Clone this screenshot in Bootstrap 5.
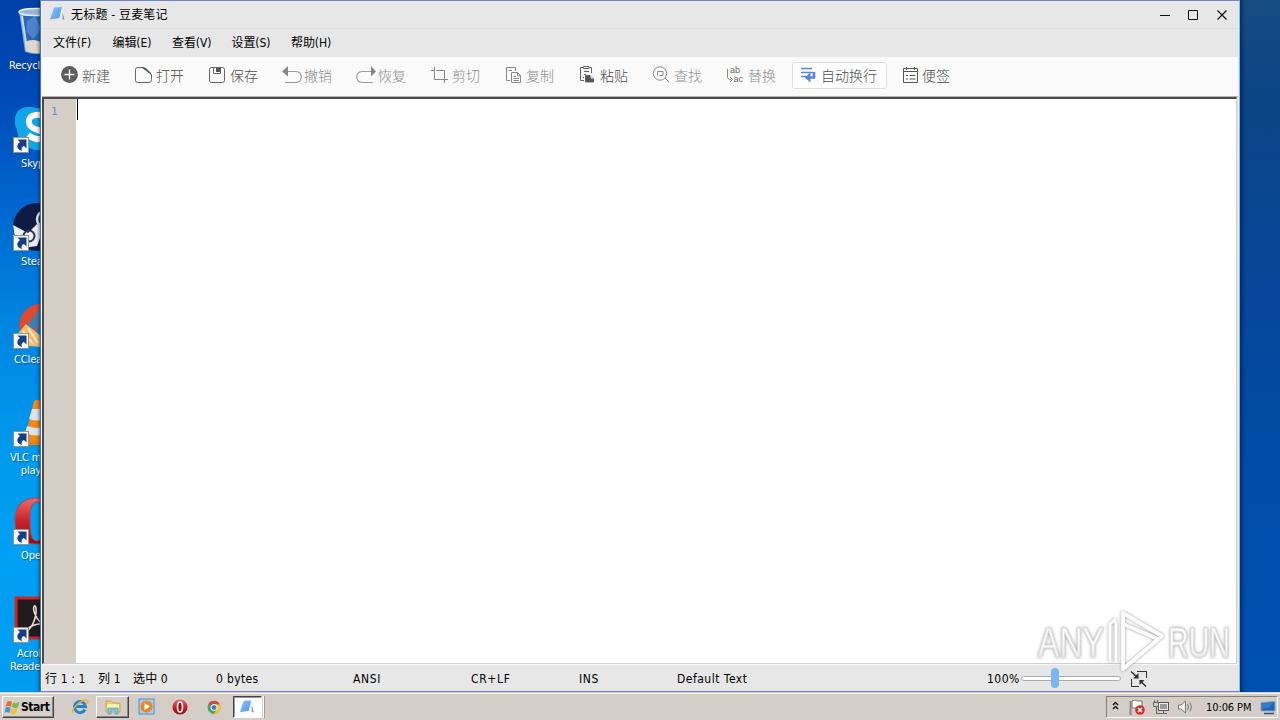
<!DOCTYPE html>
<html lang="zh-CN">
<head>
<meta charset="utf-8">
<meta name="viewport" content="width=device-width, initial-scale=1">
<title>无标题 - 豆麦笔记</title>
<link href="https://cdn.jsdelivr.net/npm/bootstrap@5.3.0/dist/css/bootstrap.min.css" rel="stylesheet">
<style>
html,body{height:100%}
body{font-family:"DejaVu Sans Condensed","Noto Sans CJK SC",sans-serif;font-stretch:condensed;font-size:12px;line-height:1;color:#000;overflow:hidden}
svg{display:block;flex:none}
.desk{width:1280px;height:720px;background:linear-gradient(180deg,#0040a8 0,#0049b6 90px,#0065ce 200px,#0086e3 330px,#0099ee 450px,#00a0f4 560px,#009cf2 690px)}
.desk-right{left:1239px;top:0;width:41px;height:692px;background:linear-gradient(90deg,rgba(0,20,70,.55),transparent 7px),linear-gradient(180deg,#174c82 0,#0c4585 90px,#06469a 300px,#004da8 460px,#0050b0 692px)}
/* desktop shortcuts */
.shortcut{left:0;width:64px;color:#fff;font-size:11px;line-height:13px;text-align:center;text-shadow:1px 1px 1px rgba(0,32,80,.5)}
.shortcut svg{position:absolute;left:13px;top:0}
.shortcut span{position:absolute;top:53px;white-space:nowrap;font-family:"DejaVu Sans Condensed";letter-spacing:-.15px}
/* application window */
.app{left:40px;top:0;width:1200px;height:692px;background:#e7e7e7;border:1px solid #6f86c8;border-color:#6f86c8 #8eb9ee #6f7fe0 #5474a4;box-shadow:inset 1px 0 #f0f4fb,inset -1px 0 #d9ebfb,-1px 0 3px rgba(0,20,70,.55);z-index:2}
.caption{height:28px;padding:1px 0 0 8px;border-bottom:1px solid #dedede}
.caption .t{width:98px;margin-left:4px;white-space:nowrap;letter-spacing:.2px}
.caption .btns{padding-right:10px}
.menus{height:28px;padding-left:12px}
.menus span{width:59.5px;font-size:12px;white-space:nowrap;letter-spacing:-.1px}
.tools{height:40px;margin:0 1px;padding:0 0 3px 18px;background:#fafafa;border-bottom:1px solid #b5b5b5;font-family:"Noto Sans CJK SC",sans-serif;font-weight:300;font-size:14px;color:#4c4c4c}
.tool{width:74px;gap:4px;white-space:nowrap}
.tool.off{color:#8c8c8c}
.tool.wrap-on{width:95px;height:27px;border:1px solid #dedede;border-radius:3px;background:#fff;margin-left:-8px;padding-left:7px;gap:3px}
.tool.note{margin-left:15px;gap:2px}
.editor{height:567px;margin:0 2px 0 1px;background:#fff;border-top:2px solid #4a4a4a;border-left:2px solid #4c4c4c;border-right:1px solid #d4d0c0;border-bottom:1px solid #cfcfcf}
.gutter{width:32px;background:#d6cfc8;color:#6a90d6;padding:7px 0 0 7px;font-family:"DejaVu Sans Mono",monospace;font-size:11px}
.caret{width:1px;height:21px;margin-left:1px;background:#000}
.status{height:27px;padding:2px 0 0 4px;border-top:1px solid #f8f8f8;white-space:nowrap}
.status>span,.status>div{flex:none}
.status>span{letter-spacing:.13px}
.s1{width:53px}.s2{width:35px}.s3{width:83px}.status>.s4{width:137px;letter-spacing:.35px}.s5{width:118px}.s6{width:108px}.s7{width:98px}.status>.s8{width:310px;letter-spacing:.5px}.status>.s9{width:34px;letter-spacing:.5px}
.s5,.s6,.s7{text-indent:0}
.status>.s5,.status>.s6,.status>.s7{letter-spacing:.65px}
.slider{width:100px;height:20px;position:relative;top:-1px}
.slider .rail{height:5px;margin-top:8px;border:1px solid #ababab;border-radius:3px;background:#fff}
.slider .knob{position:absolute;left:30px;top:0;width:8px;height:20px;border-radius:4px;background:#78b8f2}
/* watermark */
.wm{left:1030px;top:602px;z-index:3}
/* taskbar */
.bar{left:0;top:692px;width:1280px;height:28px;background:#d5cec8;border-top:1px solid #d6d2bf;box-shadow:inset 0 1px #f5f3ee;z-index:4}
.start{width:52px;height:22px;margin:3px 0 0 2px;padding-left:1px;background:#d6d0ca;border:1px solid;border-color:#fff #444 #444 #fff;box-shadow:inset -1px -1px #8b8680;font:bold 12px "DejaVu Sans Condensed",sans-serif;letter-spacing:-.45px}
.task{width:33px;height:22px;margin-top:3px}
.task.up{border:1px solid;border-color:#fff #444 #444 #fff;box-shadow:inset -1px -1px #8b8680}
.task.down{width:29px;background:#fff;border:1px solid;border-color:#444 #fff #fff #444;box-shadow:inset 1px 1px #999}
.grip{width:2px;height:22px;margin:3px 0 0 1px;border-left:1px solid #fff;border-right:1px solid #a49d97}
.tray{width:172px;height:22px;margin:3px 2px 0 auto;border:1px solid;border-color:#858079 #fff #fff #858079;padding-left:5px}
.clock{width:46px;font-size:11px;letter-spacing:-.1px;white-space:nowrap}
</style>
</head>
<body>
<svg width="0" height="0" class="position-absolute">
  <defs>
    <linearGradient id="gRed" x1="0" y1="0" x2="0" y2="1"><stop offset="0" stop-color="#e86a6a"/><stop offset=".5" stop-color="#c9232a"/><stop offset="1" stop-color="#8f0d12"/></linearGradient>
    <linearGradient id="gPage" x1="0" y1="0" x2="1" y2="1"><stop offset="0" stop-color="#8cc4fb"/><stop offset="1" stop-color="#4d95ef"/></linearGradient>
    <linearGradient id="gMark" x1="0" y1="0" x2="0" y2="1"><stop offset="0" stop-color="#fff"/><stop offset=".55" stop-color="#fafafa"/><stop offset="1" stop-color="#e2e2e2"/></linearGradient>
    <symbol id="arrow" viewBox="0 0 16 16"><rect x=".5" y=".5" width="15" height="15" fill="#f4f7fa" stroke="#9a8f84"/><path d="M4.500 2.500H13.500V11.500L11 9C8.500 10 8 11.500 9 14C4 12.500 2.500 8.500 7 5Z" fill="#143f86"/></symbol>
    <symbol id="pad" viewBox="0 0 18 16"><path d="M5 1.500L13 1L10.500 12L1 13.500Z" fill="url(#gPage)"/><path d="M13 1L16 13L10.500 12Z" fill="#e6f1fc"/><path d="M13.500 6L15.500 13.500H13.500Z" fill="#7f95aa"/></symbol>
  </defs>
</svg>
<main class="desk position-relative overflow-hidden">
  <div class="desk-right position-absolute"></div>

  <div class="shortcut position-absolute" style="top:6px">
    <svg width="48" height="50" viewBox="0 0 48 50"><path d="M6 5L12 46Q24 50 36 46L42 5Z" fill="#7ea7da"/><path d="M9 10L13 40L36 42L38 8Z" fill="#2f64b2"/><path d="M14 15L22 10L28 23L20 33L13 25Z" fill="#4b83cc"/><path d="M12 36Q20 31 32 38L33 46Q22 49 13 45Z" fill="#ded8c8"/><path d="M9 10L14 44" stroke="#c6dbef" stroke-width="2"/><ellipse cx="24" cy="6" rx="18" ry="3.500" fill="#97b4d6" stroke="#e2edf7" stroke-width="1.500"/></svg>
    <span style="left:9px">Recycle Bin</span>
  </div>
  <div class="shortcut position-absolute" style="top:104px">
    <svg width="48" height="50" viewBox="0 0 48 50"><rect x="2" y="3" width="28" height="28" rx="12" fill="#10a6e8"/><circle cx="25" cy="25" r="21" fill="#10a6e8"/><path d="M33 16Q31 10 23 11Q15 12 16 19Q17 24 25 26Q32 28 30 33Q25 38 15 31" fill="none" stroke="#fff" stroke-width="6"/><use href="#arrow" y="33" width="16" height="16"/></svg>
    <span style="left:21px">Skype</span>
  </div>
  <div class="shortcut position-absolute" style="top:202px">
    <svg width="48" height="50" viewBox="0 0 48 50"><circle cx="24" cy="25" r="24" fill="#0e1b45"/><path d="M0 23L15 31L24 22L31 26L24 44L10 46L2 36Z" fill="#e9edf3"/><circle cx="16" cy="34" r="5.500" fill="none" stroke="#26355d" stroke-width="2"/><circle cx="32" cy="17" r="8" fill="#24345e" stroke="#e9edf3" stroke-width="2.500"/><use href="#arrow" y="33" width="16" height="16"/></svg>
    <span style="left:21px">Steam</span>
  </div>
  <div class="shortcut position-absolute" style="top:300px">
    <svg width="48" height="50" viewBox="0 0 48 50"><path d="M27 4A21 21 0 0 0 8 33L20 38L30 20Z" fill="#df4930"/><path d="M29 3L24 13L14 25L19 31L30 23Z" fill="#3d7fb0"/><path d="M13 24L28 36V47L15 46L2 37Z" fill="#edbd72"/><path d="M15 28L25 43M10 31L20 44" stroke="#fbe6b8" stroke-width="2"/><use href="#arrow" y="33" width="16" height="16"/></svg>
    <span style="left:14px">CCleaner</span>
  </div>
  <div class="shortcut position-absolute" style="top:398px">
    <svg width="48" height="50" viewBox="0 0 48 50"><path d="M8 38H42L45 47H4Z" fill="#ed8110"/><path d="M23 2Q25 1 27 3L39 40Q24 47 12 40L21 3Z" fill="#f28a17"/><path d="M19 11H30L33 21Q24 24 16 21ZM14 28Q25 32 35 28L37 35Q24 40 12 35Z" fill="#dfe3e8"/><use href="#arrow" y="33" width="16" height="16"/></svg>
    <span style="left:11px;margin-left:-1px">VLC media<br>player</span>
  </div>
  <div class="shortcut position-absolute" style="top:496px">
    <svg width="48" height="50" viewBox="0 0 48 50"><path d="M24 2C8 2 2 12 2 25S8 48 24 48 45 38 45 25 39 2 24 2ZM24 6C30 6 32 15 32 25S30 45 24 45 17 36 17 25 18 6 24 6Z" fill="url(#gRed)" fill-rule="evenodd" stroke="#bd4046"/><use href="#arrow" y="33" width="16" height="16"/></svg>
    <span style="left:21px">Opera</span>
  </div>
  <div class="shortcut position-absolute" style="top:594px">
    <svg width="48" height="50" viewBox="0 0 48 50"><rect x="3" y="4" width="42" height="40" fill="#221b1d" stroke="#d8201f" stroke-width="3"/><path d="M12 37C18 37 24 24 23 14C22 9 19 13 22 20C24 26 30 32 36 31C31 28 18 30 12 37Z" fill="none" stroke="#e6ddd4" stroke-width="1.600"/><use href="#arrow" y="33" width="16" height="16"/></svg>
    <span style="left:10px">Acrobat<br>Reader DC</span>
  </div>

  <section class="app position-absolute">
    <header class="caption d-flex align-items-center">
      <svg width="18" height="16" style="margin-top:-2px"><use href="#pad"/></svg>
      <span class="t">无标题 - 豆麦笔记</span>
      <div class="btns d-flex ms-auto">
        <svg width="70" height="14" viewBox="0 0 70 14" fill="none" stroke="#111"><path d="M1 7.500H11"/><path d="M29.500 2.500H38.500V11.500H29.500Z"/><path d="M58.500 2.500L67.500 11.500M67.500 2.500L58.500 11.500" stroke-width="1.200"/></svg>
      </div>
    </header>
    <nav class="menus d-flex align-items-center"><span>文件(F)</span><span>编辑(E)</span><span>查看(V)</span><span>设置(S)</span><span>帮助(H)</span></nav>
    <div class="tools d-flex align-items-center">
      <div class="tool d-flex align-items-center"><svg width="18" height="18" viewBox="0 0 18 18"><circle cx="9.500" cy="8.500" r="8.400" fill="#5d5d5d"/><path d="M4.500 8.500H14.500M9.500 3.500V13.500" stroke="#fff" stroke-width="1.300"/></svg>新建</div>
      <div class="tool d-flex align-items-center"><svg width="18" height="18" viewBox="0 0 18 18"><path d="M3.500 1.500H9.500L17.500 8.500V13.500Q17.500 16.500 15 16.500H3.500Q1.500 16.500 1.500 14.500V3.500Q1.500 1.500 3.500 1.500Z" fill="none" stroke="#666"/><path d="M7.500 1.500H11L17 7V8.500L9.500 3Z" fill="#555"/></svg>打开</div>
      <div class="tool d-flex align-items-center"><svg width="18" height="18" viewBox="0 0 18 18"><rect x="1.500" y="1.500" width="15" height="15" rx="2" fill="none" stroke="#666"/><path d="M5.500 2V7.500H12.500V2" fill="none" stroke="#666"/><rect x="8" y="2" width="4" height="4" fill="#555"/></svg>保存</div>
      <div class="tool off d-flex align-items-center"><svg width="20" height="18" viewBox="0 0 20 18" style="margin-right:-2px"><path d="M5 5.500H14C21 6 21 16 14 16.500H3" fill="none" stroke="#9a9a9a" stroke-width="1.100"/><path d="M0 5.500L6 0V10.500Z" fill="#888"/></svg>撤销</div>
      <div class="tool off d-flex align-items-center"><svg width="20" height="18" viewBox="0 0 20 18" style="margin-right:-2px"><path d="M15 5.500H6C-1 6-1 16 6 16.500H17" fill="none" stroke="#9a9a9a" stroke-width="1.100"/><path d="M20 5.500L15 0V10.500Z" fill="#888"/></svg>恢复</div>
      <div class="tool off d-flex align-items-center"><svg width="18" height="18" viewBox="0 0 18 18" fill="none" stroke="#888"><path d="M1 4.500H4M6 4.500H14.500V17M4.500 1V13.500H18"/></svg>剪切</div>
      <div class="tool off d-flex align-items-center"><svg width="18" height="18" viewBox="0 0 18 18" fill="none" stroke="#888"><path d="M6 14.500H2.500V1.500H11.500V5M4.500 4.500H8"/><path d="M7.500 6.500H13.500L16.500 9.500V16.500H7.500ZM13.500 6.500V10H17M9.500 10.500H12M9.500 12.500H15M9.500 14.500H15"/></svg>复制</div>
      <div class="tool d-flex align-items-center"><svg width="18" height="18" viewBox="0 0 18 18" fill="none" stroke="#666"><path d="M5 1.500H2.500V14.500H6M11 1.500H13.500V7"/><path d="M5.500 .5H11V2.500H5.500ZM6 5.500H11M6 8.500H8M5 11.500H6"/><path d="M7.500 9.500H12.500L15 12H15.500V16H7.500Z" fill="#555"/><path d="M13 9V12H16" stroke="#fff"/></svg>粘贴</div>
      <div class="tool off d-flex align-items-center"><svg width="18" height="18" viewBox="0 0 18 18" fill="none" stroke="#888"><circle cx="8" cy="7.500" r="6.700"/><path d="M13 12L17 16M5.500 9.500V5.500H11V9.500H7.500"/></svg>查找</div>
      <div class="tool off d-flex align-items-center"><svg width="18" height="18" viewBox="0 0 18 18" fill="none" stroke="#888"><path d="M1.500 3V11.500Q1.500 13.500 5 13.500M4 11L6.500 13.500L4 16"/><text x="4" y="7" font-size="9" fill="#666" stroke="none" font-family="Liberation Sans" font-weight="400">ab</text><text x="7.500" y="16" font-size="9" fill="#666" stroke="none" font-family="Liberation Sans" font-weight="400">ac</text></svg>替换</div>
      <div class="tool wrap-on d-flex align-items-center"><svg width="18" height="18" viewBox="0 0 18 18" fill="none" stroke="#5687e8"><path d="M1 2.500H12M1 6.500H13M1 10.500H6" stroke-width="1.300"/><path d="M14 6V11.500H10" stroke-width="2.600"/><path d="M4.500 11.500L10.500 6.500V16.500Z" fill="#5687e8" stroke="none"/></svg>自动换行</div>
      <div class="tool note d-flex align-items-center"><svg width="18" height="18" viewBox="0 0 18 18" fill="none" stroke="#555"><path d="M1.500 2.500H15.500V16.500H1.500ZM1.500 5.500H15.500M4.500 1V4M12.500 1V4M4 9.500H6M7.500 9.500H13.500M4 13H6M7.500 13H13.500"/></svg>便签</div>
    </div>
    <div class="editor d-flex"><div class="gutter">1</div><div class="caret"></div></div>
    <footer class="status d-flex align-items-center">
      <span class="s1">行 1 : 1</span><span class="s2">列 1</span><span class="s3">选中 0</span><span class="s4">0 bytes</span><span class="s5">ANSI</span><span class="s6">CR+LF</span><span class="s7">INS</span><span class="s8">Default Text</span><span class="s9">100%</span>
      <div class="slider"><div class="rail"></div><div class="knob"></div></div>
      <svg class="ms-2" width="20" height="18" viewBox="0 0 20 18" fill="none" stroke="#333"><path d="M8 1.500H17.500V8M2.500 9V16.500H10M12 1.500H17.500M2.500 12V16.500"/><path d="M2 1.500L9 8M17 16.500L11 10.500" stroke-width="1.600"/><path d="M9.500 3V8.500H4ZM10.500 15V10H15.500Z" fill="#333" stroke="none"/></svg>
    </footer>
  </section>

  <svg class="wm position-absolute" width="215" height="75" viewBox="0 0 215 75">
    <g font-family="Liberation Sans" font-size="43" fill="url(#gMark)" stroke="#e0e0e0" stroke-width="1" style="filter:drop-shadow(0 0 1.500px #999)">
      <text x="8" y="55" textLength="66" lengthAdjust="spacingAndGlyphs">ANY</text>
      <text x="138" y="55" textLength="62" lengthAdjust="spacingAndGlyphs">RUN</text>
      <path d="M80 60V22L86 17M86 61V19" fill="none" stroke="#fff" stroke-width="3"/>
      <path d="M93 11L132 34L93 67ZM93 22L128 37" fill="none" stroke="#fbfbfb" stroke-width="4" stroke-linejoin="round"/>
    </g>
  </svg>

  <footer class="bar position-absolute d-flex align-items-start">
    <div class="start d-flex align-items-center"><svg width="17" height="17" viewBox="0 0 17 17"><path d="M3 3Q6 1 8 3L7 8Q4 6 1.500 8Z" fill="#ed6a35"/><path d="M9 3.500Q12 5 15.500 3L14 8Q11 10 8 8Z" fill="#79b84b"/><path d="M1.500 9Q4 7 6.500 9L5.500 14Q3 12 .5 14Z" fill="#4b90d9"/><path d="M7.500 9.500Q10 11 13.500 9L12 14Q9 16 6.500 14Z" fill="#f4bd36"/></svg>Start</div>
    <div class="task d-flex align-items-center justify-content-center" style="margin-left:9px"><svg width="18" height="18" viewBox="0 0 18 18"><path d="M14 11.500A5.500 5.500 0 1 1 14.500 8.500H5" fill="none" stroke="#2186d2" stroke-width="3"/><path d="M2 15C-1 12 10 1 16 2Q18 3 15 7" fill="none" stroke="#e5b431" stroke-width="1.500"/></svg></div>
    <div class="task up d-flex align-items-center justify-content-center"><svg width="18" height="18" viewBox="0 0 18 18"><path d="M2 3H7L9 5H16V14H2Z" fill="#edce70" stroke="#cba74b"/><path d="M3 6H15V10H3Z" fill="#fff0ae"/><path d="M4 16V10H14V16H11V12H7V16Z" fill="#7fc3e7" stroke="#5799bc" stroke-width=".6"/></svg></div>
    <div class="task d-flex align-items-center justify-content-center"><svg width="18" height="18" viewBox="0 0 18 18"><rect x="2" y="1" width="15" height="15" fill="#aacceb" stroke="#5190c8"/><circle cx="9.500" cy="8.500" r="6" fill="#ed8620"/><path d="M7.500 5L13 8.500L7.500 12Z" fill="#fff"/></svg></div>
    <div class="task d-flex align-items-center justify-content-center" style="margin-left:1px"><svg width="18" height="18" viewBox="0 0 18 18"><circle cx="9" cy="9" r="7.600" fill="url(#gRed)"/><ellipse cx="9" cy="9" rx="2.500" ry="5" fill="#9f1116" stroke="#fff" stroke-width="1.600"/></svg></div>
    <div class="task d-flex align-items-center justify-content-center" style="margin-left:1px"><svg width="17" height="17" viewBox="0 0 17 17"><circle cx="9" cy="8.500" r="6.500" fill="#4ba95b"/><path d="M9 8.500L3.500 5A6.500 6.500 0 0 1 15 5.500H9Z" fill="#d94536"/><path d="M9 5.500H15A6.500 6.500 0 0 1 9 15L12 9Z" fill="#f2c530"/><circle cx="9" cy="8.500" r="3" fill="#3c7edb" stroke="#fff"/></svg></div>
    <div class="task down d-flex align-items-center justify-content-center" style="margin-left:3px"><svg width="17" height="16"><use href="#pad"/></svg></div><div class="grip"></div>
    <div class="tray d-flex align-items-center">
      <svg width="92" height="20" viewBox="0 0 92 20"><path d="M1 8L3.500 5.500L6 8M1 12L3.500 9.500L6 12" fill="none" stroke="#000" stroke-width="1.300"/><path d="M18.500 4V18" stroke="#888" stroke-width="2"/><path d="M20 4Q23 2 25 4H30V11H20Z" fill="#fff" stroke="#777"/><circle cx="28" cy="13" r="4.800" fill="#d92d28"/><path d="M26 11L30 15M30 11L26 15" stroke="#fff" stroke-width="1.500"/><rect x="46.500" y="5.500" width="10" height="8" fill="#eee" stroke="#555"/><rect x="48" y="7" width="7" height="5" fill="#999"/><path d="M42.500 3V5M45.500 3V5M41.500 5.500H46.500V9.500H41.500ZM44.500 9V16.500H55M51.500 14V17" fill="none" stroke="#666"/><path d="M66.500 8H69L73.500 4V16L69 12H66.500Z" fill="#eee" stroke="#777"/><path d="M75.500 7Q77.500 10 75.500 13M78 5.500Q81 10 78 14.500" fill="none" stroke="#777"/></svg>
      <span class="clock" style="margin-left:2px">10:06 PM</span>
      <svg width="16" height="15" viewBox="0 0 16 15" style="margin-left:8px"><path d="M1 2.500L15 1.500V11H1Z" fill="#1b62bb" stroke="#89a6c4"/><path d="M2 3.500L14 2.500L8 8L2 9Z" fill="#377bcb"/><path d="M4 13.500H14" stroke="#345078" stroke-width="1.500"/></svg>
    </div>
  </footer>
</main>
<script src="https://cdn.jsdelivr.net/npm/bootstrap@5.3.0/dist/js/bootstrap.bundle.min.js"></script>
</body>
</html>
